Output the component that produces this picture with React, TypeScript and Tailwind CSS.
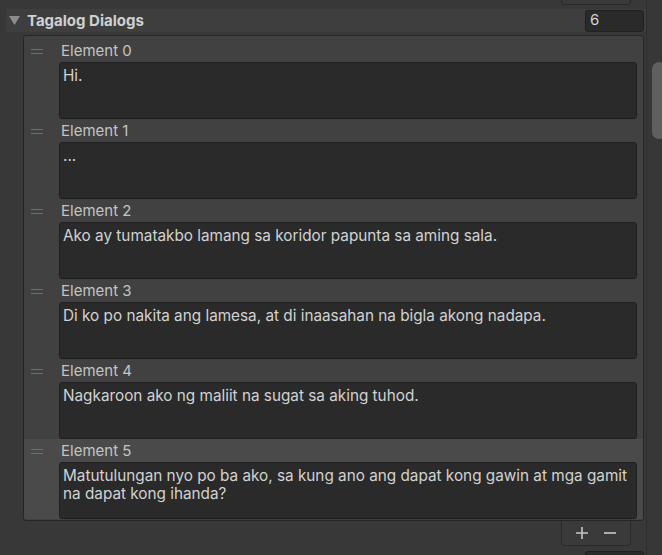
const dialogs: string[][] = [
  ['Hi.'],
  ['...'],
  ['Ako ay tumatakbo lamang sa koridor papunta sa aming sala.'],
  ['Di ko po nakita ang lamesa, at di inaasahan na bigla akong nadapa.'],
  ['Nagkaroon ako ng maliit na sugat sa aking tuhod.'],
  ['Matutulungan nyo po ba ako, sa kung ano ang dapat kong gawin at mga gamit', 'na dapat kong ihanda?'],
]

function Handle() {
  return (
    <div className="flex flex-col gap-y-[3px] pt-[10px] pl-[7px]">
      <div className="w-[12px] h-px bg-[#6e6e6e]" />
      <div className="w-[12px] h-px bg-[#6e6e6e]" />
    </div>
  )
}

function ElementRow({ index, lines, selected }: { index: number; lines: string[]; selected?: boolean }) {
  return (
    <div className={`flex h-[80px] ${selected ? 'bg-[#4a4a4a]' : ''}`}>
      <div className="w-[35px] shrink-0">
        <Handle />
      </div>
      <div className="flex flex-col flex-1">
        <div className="h-[23px] shrink-0 pt-[3px] leading-[18px] pl-[2px] text-[#c4c4c4]">Element {index}</div>
        <div className="h-[57px] shrink-0 mr-[6px] bg-[#2a2a2a] border border-[#1f1f1f] rounded-[3px] px-[3px] pt-[4px] leading-[18px] text-[15.3px] text-[#d2d2d2] whitespace-nowrap">
          {lines.map((l, i) => (
            <div key={i}>{l}</div>
          ))}
        </div>
      </div>
    </div>
  )
}

function Footer() {
  return (
    <div className="ml-[561px] w-[70px] h-[25px] border border-t-0 border-[#2a2a2a] rounded-b-[4px] bg-[#3a3a3a] flex items-center justify-around px-[6px]">
      <svg width="14" height="14" viewBox="0 0 14 14">
        <path d="M7 1v12M1 7h12" stroke="#c8c8c8" strokeWidth="1.6" />
      </svg>
      <svg width="14" height="14" viewBox="0 0 14 14">
        <path d="M1 7h12" stroke="#c8c8c8" strokeWidth="1.6" />
      </svg>
    </div>
  )
}

export default function App() {
  return (
    <div className="w-[662px] h-[555px] overflow-hidden bg-[#383838] flex font-['Inter','Noto_Sans',sans-serif] text-[15px]">
      <div className="w-[646px] shrink-0">
        <div className="ml-[561px] w-[70px] h-[5px] border border-t-0 border-[#2a2a2a] rounded-b-[4px] bg-[#3a3a3a]" />

        <div className="mt-[4px] ml-[6px] h-[23px] bg-[#3e3e3e] flex items-center pl-[3px] pr-[2px]">
          <svg width="11" height="9" viewBox="0 0 11 9" className="mr-[7px]">
            <path d="M0 0h11L5.5 9z" fill="#8c8c8c" />
          </svg>
          <span className="pt-px font-bold text-[#d0d0d0]">Tagalog Dialogs</span>
          <div className="ml-auto w-[59px] h-[22px] bg-[#2a2a2a] border border-[#202020] rounded-[3px] pl-[4px] flex items-center text-[#d2d2d2]">
            6
          </div>
        </div>

        <div className="mt-[3px] ml-[23px] w-[621px] border border-[#262626] rounded-[3px] bg-[#414141] pt-[3px] pb-px">
          {dialogs.map((lines, i) => (
            <ElementRow key={i} index={i} lines={lines} selected={i === 5} />
          ))}
        </div>

        <Footer />

        <div className="mt-[5px] ml-[585px] w-[59px] h-[22px] bg-[#2a2a2a] border border-[#202020] rounded-[3px]" />
      </div>

      <div className="flex-1 border-l border-[#2e2e2e] bg-[#373737] overflow-hidden pt-[62px] pl-[5px]">
        <div className="w-[14px] h-[77px] rounded-full bg-[#5f5f5f]" />
      </div>
    </div>
  )
}
